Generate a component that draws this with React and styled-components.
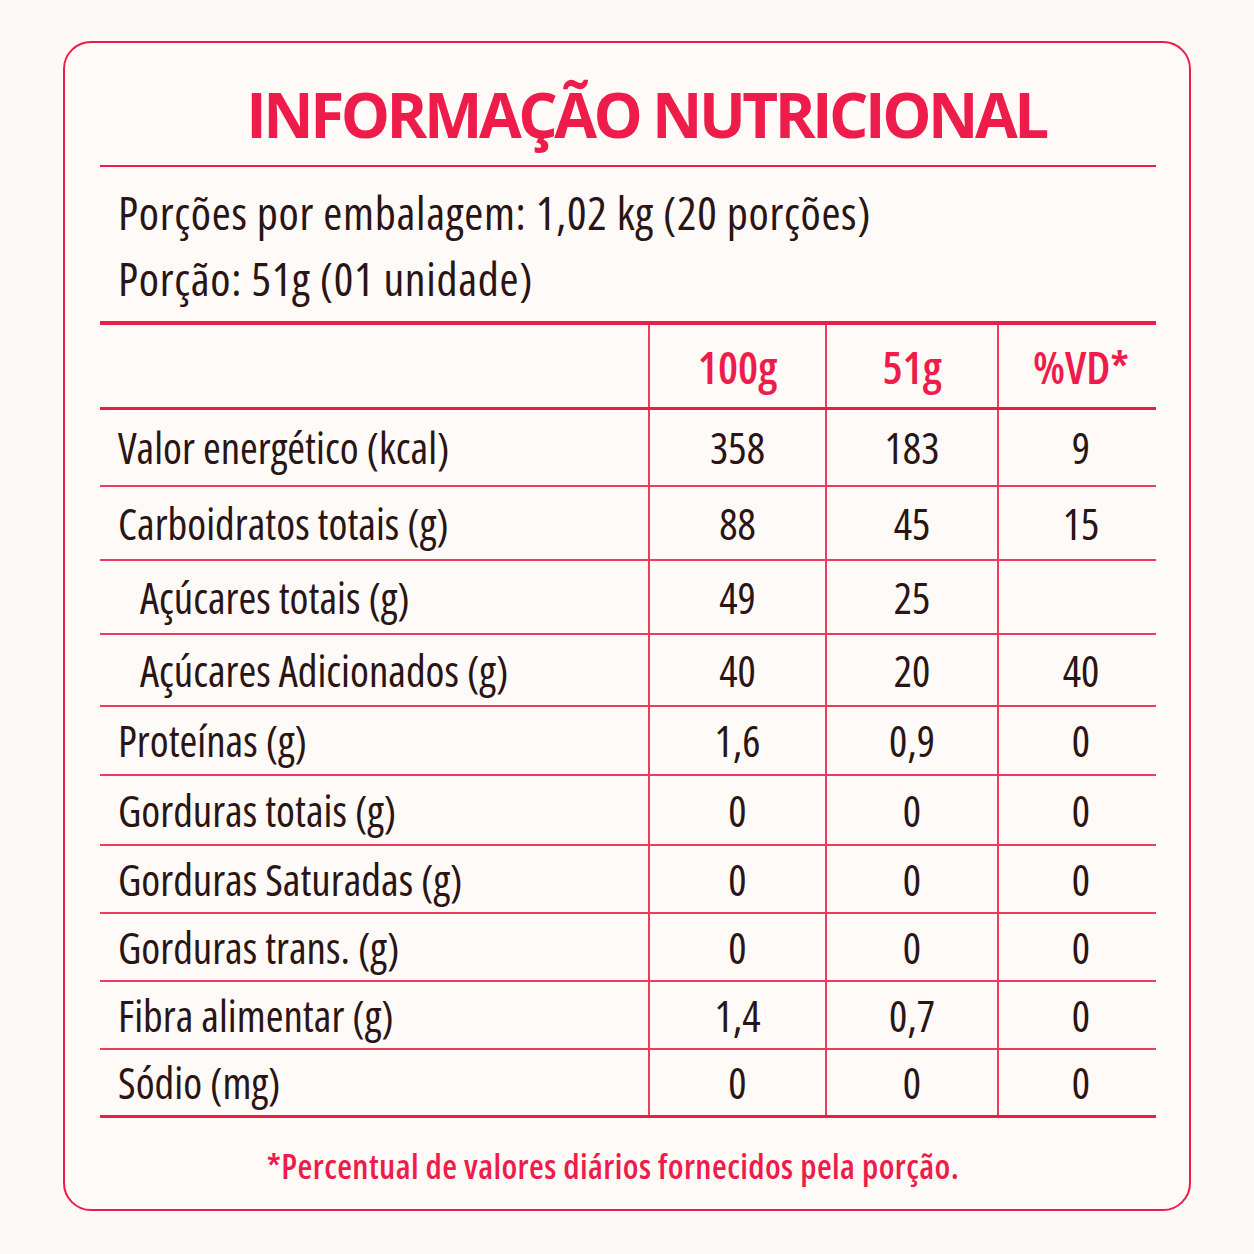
import styled, { createGlobalStyle } from "styled-components";

const GlobalStyle = createGlobalStyle`
  body {
    margin: 0;
    background: #fcf9f6;
    font-family: "Open Sans", "Noto Sans", sans-serif;
    color: #2a1414;
  }
`;

const red = "#ee1c4a";
const rule = "#ef3a60";

const Card = styled.div`
  box-sizing: border-box;
  width: 1128px;
  margin: 41px 0 0 63px;
  padding: 40px 33px 26px 35px;
  border: 2px solid ${red};
  border-radius: 28px;
  background: #fdfaf7;
`;

const Title = styled.h1`
  margin: 0;
  padding-left: 36px;
  text-align: center;
  font-size: 62px;
  line-height: 1;
  font-weight: 700;
  letter-spacing: -3.5px;
  color: ${red};
  padding-bottom: 20px;
  border-bottom: 2px solid ${red};
`;

const Intro = styled.div`
  padding: 12px 0 10px 18px;
  font-size: 46px;
  line-height: 66px;
  font-stretch: 75%;
  letter-spacing: 0.7px;
`;

const Table = styled.div`
  border-top: 4px solid ${red};
  border-bottom: 3px solid ${red};
`;

const Row = styled.div`
  box-sizing: border-box;
  display: grid;
  grid-template-columns: 548px 177px 172px 1fr;
  height: ${(p) => p.h}px;
  border-bottom: ${(p) => (p.last ? "none" : `${p.head ? 3 : 2}px solid ${p.head ? red : rule}`)};
  font-size: 43px;
  font-stretch: 75%;
`;

const Label = styled.div`
  display: flex;
  align-items: center;
  padding-left: ${(p) => (p.indent ? 40 : 18)}px;
`;

const Cell = styled.div`
  display: flex;
  align-items: center;
  justify-content: center;
  padding-left: ${(p) => (p.shift ? 7 : 0)}px;
  border-left: 2px solid ${rule};
  color: ${(p) => (p.head ? red : "inherit")};
  font-weight: ${(p) => (p.head ? 600 : 400)};
  font-size: ${(p) => (p.head ? 45 : 43)}px;
`;

const Note = styled.p`
  margin: 31px 0 0;
  padding-right: 30px;
  text-align: center;
  font-size: 34px;
  line-height: 1;
  font-weight: 600;
  font-stretch: 75%;
  letter-spacing: 0.4px;
  color: ${red};
`;

const rows = [
  ["Valor energético (kcal)", "358", "183", "9", false, 77],
  ["Carboidratos totais (g)", "88", "45", "15", false, 74],
  ["Açúcares totais (g)", "49", "25", "", true, 74],
  ["Açúcares Adicionados (g)", "40", "20", "40", true, 72],
  ["Proteínas (g)", "1,6", "0,9", "0", false, 69],
  ["Gorduras totais (g)", "0", "0", "0", false, 70],
  ["Gorduras Saturadas (g)", "0", "0", "0", false, 68],
  ["Gorduras trans. (g)", "0", "0", "0", false, 68],
  ["Fibra alimentar (g)", "1,4", "0,7", "0", false, 68],
  ["Sódio (mg)", "0", "0", "0", false, 65],
];

export default function App() {
  return (
    <>
      <GlobalStyle />
      <Card>
        <Title>INFORMAÇÃO NUTRICIONAL</Title>
        <Intro>
          Porções por embalagem: 1,02 kg (20 porções)
          <br />
          Porção: 51g (01 unidade)
        </Intro>
        <Table>
          <Row h={85} head>
            <Label />
            <Cell head>100g</Cell>
            <Cell head>51g</Cell>
            <Cell head shift>%VD*</Cell>
          </Row>
          {rows.map(([name, a, b, c, indent, h], i) => (
            <Row key={name} h={h} last={i === rows.length - 1}>
              <Label indent={indent}>{name}</Label>
              <Cell>{a}</Cell>
              <Cell>{b}</Cell>
              <Cell shift>{c}</Cell>
            </Row>
          ))}
        </Table>
        <Note>*Percentual de valores diários fornecidos pela porção.</Note>
      </Card>
    </>
  );
}
